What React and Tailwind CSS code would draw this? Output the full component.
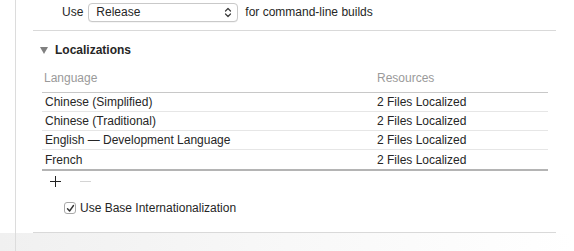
import React from 'react';

const rows = [
  'Chinese (Simplified)',
  'Chinese (Traditional)',
  'English — Development Language',
  'French',
];

function UpDown() {
  return (
    <svg width="8" height="11" viewBox="0 0 8 11" fill="none" stroke="#3a3a3a" strokeWidth="1.2" strokeLinecap="round" strokeLinejoin="round">
      <path d="M1.5 4 L4 1.5 L6.5 4" />
      <path d="M1.5 7 L4 9.5 L6.5 7" />
    </svg>
  );
}

export default function App() {
  return (
    <div className="w-[574px] h-[251px] bg-white overflow-hidden flex flex-col text-[12px] text-[#262626]" style={{ fontFamily: '"Liberation Sans", Arial, sans-serif' }}>
      <div className="flex">
        <div className="w-[15px] shrink-0" />
        <div className="flex-1 border-l border-[#dcdcdc] flex flex-col">
          {/* build config row */}
          <div className="flex items-center h-[23px] pt-[1px] pl-[46px]">
            <span>Use</span>
            <div className="ml-[5px] w-[150px] h-[19px] border border-[#c9c9c9] rounded-[4px] bg-white flex items-center justify-between pl-[7px] pr-[5px] shadow-[0_0.5px_0_rgba(0,0,0,0.08)]">
              <span>Release</span>
              <UpDown />
            </div>
            <span className="ml-[7px]">for command-line builds</span>
          </div>
          <div className="ml-[17px] w-[523px] h-px bg-[#d9d9d9] mt-[7px]" />

          {/* Localizations header */}
          <div className="flex items-center h-[14px] mt-[12px] pl-[24px]">
            <svg width="8" height="7" viewBox="0 0 8 7">
              <path d="M0 0 L8 0 L4 7 Z" fill="#808080" />
            </svg>
            <span className="ml-[7px] font-bold">Localizations</span>
          </div>

          {/* table */}
          <div className="ml-[26px] w-[506px] mt-[14px]">
            <div className="flex h-[14px] items-center text-[#9a9a9a] pl-[2px]">
              <span className="w-[333px]">Language</span>
              <span>Resources</span>
            </div>
            <div className="h-px bg-[#c8c8c8] mt-[7px]" />
            {rows.map((r, i) => (
              <div key={r} className={`flex items-center h-[19px] pl-[3px] ${i < rows.length - 1 ? 'border-b border-[#e6e6e6]' : ''}`}>
                <span className="w-[332px]">{r}</span>
                <span>2 Files Localized</span>
              </div>
            ))}
            <div className="h-[2px] bg-[#b4b4b4]" />
            <div className="flex items-center h-[20px] pl-[8px]">
              <svg width="11" height="11" viewBox="0 0 11 11" stroke="#222" strokeWidth="1">
                <path d="M5.5 0 V11 M0 5.5 H11" />
              </svg>
              <svg className="ml-[19px]" width="11" height="11" viewBox="0 0 11 11" stroke="#d4d4d4" strokeWidth="1">
                <path d="M0 5.5 H11" />
              </svg>
            </div>
          </div>

          {/* checkbox */}
          <div className="flex items-center mt-[8px] pl-[48px]">
            <div className="w-[12px] h-[12px] border border-[#a8a8a8] rounded-[3px] bg-white flex items-center justify-center">
              <svg width="9" height="9" viewBox="0 0 9 9" fill="none" stroke="#333" strokeWidth="1.4" strokeLinecap="round" strokeLinejoin="round">
                <path d="M1.5 4.8 L3.6 7 L7.5 1.5" />
              </svg>
            </div>
            <span className="ml-[4px]">Use Base Internationalization</span>
          </div>
          <div className="ml-[17px] w-[523px] h-px bg-[#d9d9d9] mt-[15px]" />
        </div>
      </div>
      <div className="flex-1 bg-gradient-to-r from-[#f0f0f0] via-[#f8f8f8] to-white flex">
        <div className="w-[15px] shrink-0" />
        <div className="border-l border-[#dcdcdc]" />
      </div>
    </div>
  );
}
